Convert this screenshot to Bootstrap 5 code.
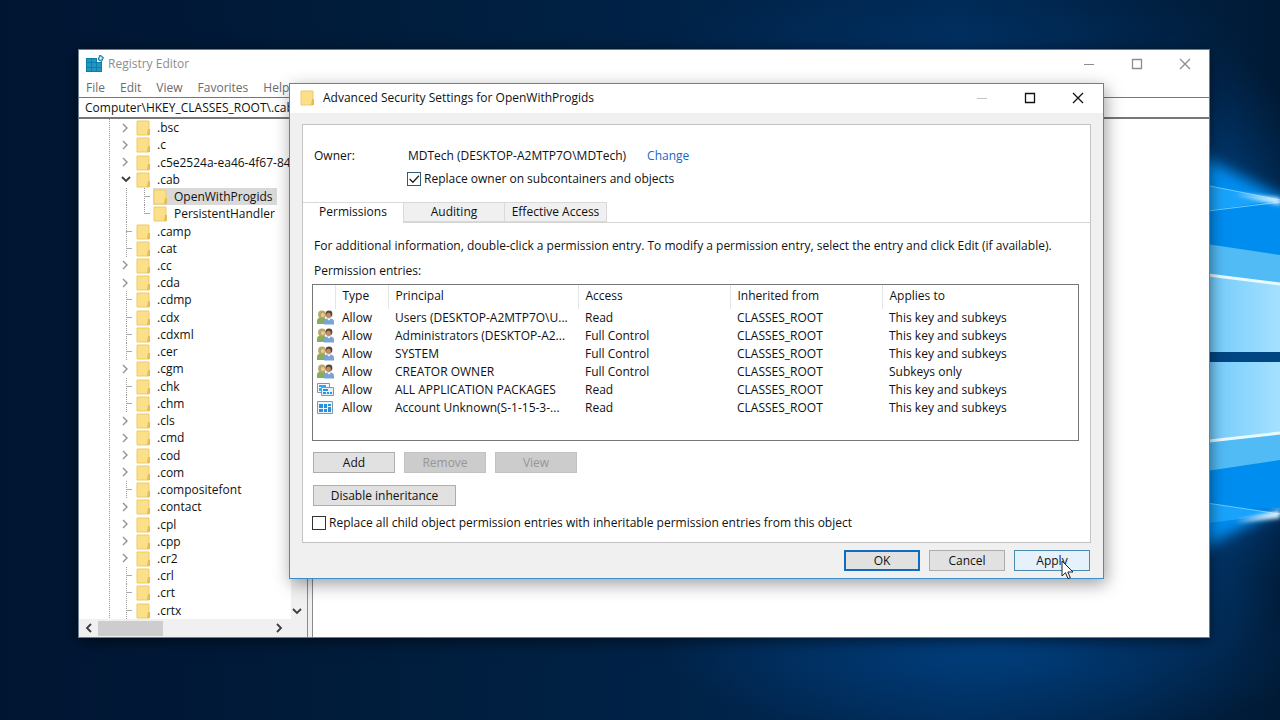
<!DOCTYPE html>
<html lang="en">
<head>
<meta charset="utf-8">
<meta name="viewport" content="width=device-width, initial-scale=1">
<title>Registry Editor</title>
<link href="https://cdn.jsdelivr.net/npm/bootstrap@5.3.0/dist/css/bootstrap.min.css" rel="stylesheet">
<style>
  body { font-family: "Open Sans", "Noto Sans", sans-serif; font-size: 12px; line-height: 18px; color: #111; background: #001c3a; }
  button, input { font: inherit; color: inherit; }
  .desktop { padding: 49px 70px 82px 78px; isolation: isolate; }
  .wallpaper { z-index: -1; }

  /* Registry Editor window */
  .reg-window { background: #fff; border: 1px solid #6d7f8f; box-shadow: 0 3px 14px rgba(0,0,0,.55); }
  .reg-title { height: 28px; padding: 0 18px 1px 7px; color: #8d8d8d; }
  .win-controls { gap: 36px; }
  .win-controls button { width: 12px; height: 12px; padding: 0; border: 0; background: none; display: block; }
  .win-controls svg { display: block; }
  .reg-menu { height: 19px; gap: 15px; padding: 1px 0 0 7px; }
  .reg-menu a { color: #6b6b6b; text-decoration: none; }
  .address { height: 22px; border: solid #777; border-width: 1px 0 2px; padding: 0 6px; outline: 0; width: 100%; }
  .tree-pane { width: 228px; }
  .tree { background: repeating-linear-gradient(#999 0 1px, #fff 1px 2px) 30px 0 / 1px 100% no-repeat; padding-left: 39px; }
  .tree li { flex: 1 1 0; line-height: 17px; min-height: 17px; white-space: nowrap; }
  .twist { width: 18px; flex: none; display: flex; align-items: center; align-self: stretch; padding-left: 3px; }
  .stub { background:
    linear-gradient(#aaa, #aaa) 8px 50% / 6px 1px no-repeat,
    repeating-linear-gradient(#999 0 1px, #fff 1px 2px) 8px 0 / 1px 100% no-repeat; }
  .tree li.child .line { width: 18px; flex: none; align-self: stretch; background: repeating-linear-gradient(#999 0 1px, #fff 1px 2px) 8px 0 / 1px 100% no-repeat; }
  .child .stub { width: 17px; }
  .child.last-child .stub { background-size: 6px 1px, 1px 50%; }
  .tree .label { padding-left: 6px; }
  .picked .label { padding-right: 5px; }
  .picked .folder, .picked .label { background-color: #d9d9d9; }
  .folder { width: 15px; height: 17px; flex: none; }
  .v-scroll { width: 16px; flex: none; background: #f0f0f0; padding: 0 5px 4px 0; }
  .h-scroll { height: 18px; background: #f0f0f0; padding: 0 23px 0 5px; }
  .thumb { width: 65px; height: 15px; background: #cdcdcd; margin-left: 5px; }
  .splitter { width: 6px; background: #f0f0f0; border: solid #8a8a8a; border-width: 0 1px; }

  /* Advanced security dialog */
  .sec-dialog { left: 289px; right: 176px; top: 83px; background: #f0f0f0; border: 1px solid #3d8fcc; box-shadow: 2px 5px 16px rgba(0,0,0,.38); padding-bottom: 7px; }
  .sec-title { height: 29px; background: #fff; padding: 0 19px 2px 10px; }
  .sec-panel { margin: 11px 12px 7px; background: #fff; border: 1px solid #c3c3c3; }
  .owner { padding: 21px 11px 14px; line-height: 20px; }
  .owner-name { width: 94px; }
  .owner a { color: #1668c4; text-decoration: none; margin-left: 21px; }
  .owner .tick-row { margin: 3px 0 0 -1px; height: 20px; }
  .tick-row { gap: 3px; }
  .tick { appearance: none; width: 14px; height: 14px; border: 1px solid #333; background: #fff; margin: 0; flex: none; }
  .tick:checked { border-color: #2c5b7c; background: url("data:image/svg+xml,%3Csvg xmlns='http://www.w3.org/2000/svg' viewBox='0 0 11 11'%3E%3Cpath d='M1.5 5.5l3 3 5.5-6' fill='none' stroke='%23222' stroke-width='1.2'/%3E%3C/svg%3E"); }
  .tabs { border-bottom: 1px solid #d4d4d4; height: 21px; margin-top: -1px; }
  .tabs button { width: 101px; border: 1px solid #d9d9d9; border-left-width: 0; background: #f0f0f0; padding: 0; height: 20px; line-height: 18px; }
  .tabs button.active { background: #fff; height: 21px; border-bottom: 0; padding-bottom: 2px; }
  .tabs button:last-child { width: 102px; }
  .tab-body { padding: 14px 11px 10px 9px; }
  .tab-body p { margin: 0 0 7px 2px; }
  .list-box { border: 1px solid #777; height: 157px; margin-bottom: 11px; }
  .entries { table-layout: fixed; width: 100%; }
  .entries th { font-weight: 400; height: 24px; padding: 0 7px 2px; border-right: 1px solid #e5e5e5; }
  .entries th:last-child { border-right: 0; }
  .entries td { height: 18px; padding: 0 7px; white-space: nowrap; overflow: hidden; text-overflow: ellipsis; }
  .entries td:first-child { padding: 0 0 0 4px; }
  .entries svg { display: block; width: 17px; height: 16px; }
  .push-row { gap: 9px; margin: 0 0 12px 1px; }
  .push { height: 21px; width: 82px; padding: 0; background: #e1e1e1; border: 1px solid #adadad; line-height: 17px; }
  .push:disabled { background: #ccc; border-color: #c2c2c2; color: #969696; }
  .push.wide { width: 143px; }
  .push.answer { width: 76px; }
  .push.ok { border: 2px solid #0f6cbf; }
  .push.hover { background: #e5f1fb; border-color: #4b8ab5; }
  .answers { gap: 9px; padding: 0 13px; }
  .pointer { left: 46px; top: 9px; z-index: 2; }
</style>
</head>
<body>
<svg class="d-none" aria-hidden="true">
  <symbol id="folder" viewBox="0 0 15 17"><path d="M1 2h12v14H1z" fill="#fbe089"/><path d="M1 2h12v14H1z" fill="none" stroke="#edcb68"/><path d="M12 10h2v6H11z" fill="#e6bd50"/></symbol>
  <symbol id="right" viewBox="0 0 8 10"><path d="M2 1l4 4-4 4" fill="none" stroke="#929292" stroke-width="1.4"/></symbol>
  <symbol id="down" viewBox="0 0 10 8"><path d="M1 2l4 4 4-4" fill="none" stroke="#3c3c3c" stroke-width="1.8"/></symbol>
  <symbol id="min" viewBox="0 0 12 12"><path d="M1 6.500h10" stroke="currentColor"/></symbol>
  <symbol id="max" viewBox="0 0 12 12"><path d="M1.500 1.500h9v9h-9z" fill="none" stroke="currentColor" stroke-width="1.3"/></symbol>
  <symbol id="close" viewBox="0 0 12 12"><path d="M1 1l10 10M11 1L1 11" stroke="currentColor" stroke-width="1.3"/></symbol>
  <symbol id="people" viewBox="0 0 17 16">
    <path d="M0 14V11q0-3 3-3.500h4q2 .5 2 3.500v3z" fill="#86ad5d"/><circle cx="5" cy="4.500" r="3.900" fill="#b9a566"/><circle cx="5.800" cy="5" r="2" fill="#e6c99f"/>
    <path d="M7 14.500V12q0-3 3-3.500h4q3 .5 3 3.500v2.500z" fill="#7ba3d6"/><circle cx="12" cy="4" r="3.400" fill="#5b4636"/><ellipse cx="11.500" cy="5.500" rx="2.300" ry="2.700" fill="#c58d66"/><path d="M10 8.500l2 2 2-2z" fill="#fff"/>
  </symbol>
  <symbol id="packages" viewBox="0 0 17 16">
    <path d="M.5 1.500h12v9H.5z" fill="#f4f9fd" stroke="#7d97ad"/><path d="M2 3h7v2H2zM2 6h2v3H2z" fill="#3ba2e5"/>
    <path d="M4.500 5.500h12v8h-12z" fill="#e5f2fb" stroke="#7d97ad"/><path d="M6 7h5v2H6zM6 10h3v2H6zM10 10h2v2h-2zM13 10h2v2h-2z" fill="#2492df"/>
  </symbol>
  <symbol id="account" viewBox="0 0 17 16">
    <path d="M.5 1.500h15v12H.5z" fill="#eef5fa" stroke="#7d97ad"/><path d="M2 4h4v4H2zM7 4h3v4H7zM11 4h3v2h-3zM2 9h4v3H2zM7 9h3v3H7zM11 7h3v5h-3z" fill="#2492df"/>
  </symbol>
</svg>

<div class="desktop position-relative min-vh-100 d-flex overflow-hidden">
  <svg class="wallpaper position-absolute top-0 start-0 w-100 h-100" viewBox="0 0 1280 720" preserveAspectRatio="none" aria-hidden="true">
    <defs>
      <linearGradient id="sky"><stop offset="0" stop-color="#001532"/><stop offset=".3" stop-color="#001d3c"/><stop offset=".75" stop-color="#002853"/><stop offset="1" stop-color="#001a35"/></linearGradient>
      <radialGradient id="low"><stop offset="0" stop-color="#004080"/><stop offset="1" stop-color="#004080" stop-opacity="0"/></radialGradient>
      <radialGradient id="glow"><stop offset="0" stop-color="#0078e0"/><stop offset=".5" stop-color="#00529f" stop-opacity=".7"/><stop offset="1" stop-color="#00407f" stop-opacity="0"/></radialGradient>
      <linearGradient id="pane"><stop offset="0" stop-color="#6cc8fb"/><stop offset="1" stop-color="#a5e1ff"/></linearGradient>
      <filter id="soft" x="-30%" y="-30%" width="160%" height="160%"><feGaussianBlur stdDeviation="7"/></filter>
      <filter id="spark" x="-30%" y="-80%" width="160%" height="260%"><feGaussianBlur stdDeviation="2"/></filter>
    </defs>
    <path fill="url(#sky)" d="M0 0h1280v720H0z"/>
    <ellipse cx="990" cy="640" rx="330" ry="110" fill="url(#low)"/>
    <ellipse cx="960" cy="50" rx="300" ry="70" fill="url(#low)" opacity=".35"/>
    <ellipse cx="1190" cy="352" rx="150" ry="320" fill="url(#glow)"/>
    <path d="M1180 146l120 60v294l-120 58z" fill="#008ef2" filter="url(#soft)"/>
    <path d="M1200 210l80-10v310l-80-10z" fill="#008df0"/>
    <path d="M1200 184l80 16-80 12zM1200 502l80 12-80 10z" fill="#19a3fb"/>
    <path d="M1200 243l80 12v205l-80 12z" fill="#51bbf6"/>
    <path d="M1200 274l80 10v149l-80 9z" fill="url(#pane)"/>
    <path d="M1200 274l80 10M1200 442l80-9" stroke="#e9faff" stroke-width="3"/>
    <path d="M1200 184l80 16M1200 212l80-10M1200 502l80 12" stroke="#65ccff"/>
    <path d="M1235 194l45 4v7zM1235 522l45-12v8z" fill="#e2f7ff" filter="url(#spark)"/>
    <path d="M1200 352h80v10h-80z" fill="#004682"/>
  </svg>

  <main class="reg-window flex-grow-1 d-flex flex-column">
    <header class="reg-title d-flex align-items-center">
      <svg width="18" height="18" viewBox="0 0 18 18" aria-hidden="true"><path d="M0 3h11v4h5v10H0z" fill="#0d7ea9"/><path d="M1 4h4v3H1zM6 4h4v3H6zM1 8h4v4H1zM6 8h4v4H6zM11 8h4v4h-4zM1 13h4v3H1zM6 13h4v3H6zM11 13h4v3h-4z" fill="#2296c0"/><path d="M14 0l3.500 2.500-2 4-3.500-2z" fill="#5cc1dc" stroke="#14799c"/><circle cx="14.700" cy="3.300" r="1" fill="#fff"/></svg>
      <span class="ms-1">Registry Editor</span>
      <div class="win-controls ms-auto d-flex">
        <button type="button" aria-label="Minimize" class="text-reset"><svg width="12" height="12"><use href="#min"/></svg></button>
        <button type="button" aria-label="Maximize" class="text-reset"><svg width="12" height="12"><use href="#max"/></svg></button>
        <button type="button" aria-label="Close" class="text-reset"><svg width="12" height="12"><use href="#close"/></svg></button>
      </div>
    </header>
    <nav class="reg-menu d-flex"><a href="#">File</a><a href="#">Edit</a><a href="#">View</a><a href="#">Favorites</a><a href="#">Help</a></nav>
    <input class="address" aria-label="Address" value="Computer\HKEY_CLASSES_ROOT\.cab\OpenWithProgids">
    <div class="flex-grow-1 d-flex">
      <div class="tree-pane d-flex flex-column">
        <div class="flex-grow-1 d-flex">
          <ul class="tree list-unstyled m-0 flex-grow-1 d-flex flex-column">
            <li class="d-flex align-items-center"><span class="twist"><svg width="8" height="10"><use href="#right"/></svg></span><svg class="folder"><use href="#folder"/></svg><span class="label">.bsc</span></li>
            <li class="d-flex align-items-center"><span class="twist"><svg width="8" height="10"><use href="#right"/></svg></span><svg class="folder"><use href="#folder"/></svg><span class="label">.c</span></li>
            <li class="d-flex align-items-center"><span class="twist"><svg width="8" height="10"><use href="#right"/></svg></span><svg class="folder"><use href="#folder"/></svg><span class="label">.c5e2524a-ea46-4f67-84</span></li>
            <li class="d-flex align-items-center"><span class="twist"><svg width="10" height="8"><use href="#down"/></svg></span><svg class="folder"><use href="#folder"/></svg><span class="label">.cab</span></li>
            <li class="child picked d-flex align-items-center"><span class="line"></span><span class="twist stub"></span><svg class="folder"><use href="#folder"/></svg><span class="label">OpenWithProgids</span></li>
            <li class="child last-child d-flex align-items-center"><span class="line"></span><span class="twist stub"></span><svg class="folder"><use href="#folder"/></svg><span class="label">PersistentHandler</span></li>
            <li class="d-flex align-items-center"><span class="twist stub"></span><svg class="folder"><use href="#folder"/></svg><span class="label">.camp</span></li>
            <li class="d-flex align-items-center"><span class="twist stub"></span><svg class="folder"><use href="#folder"/></svg><span class="label">.cat</span></li>
            <li class="d-flex align-items-center"><span class="twist"><svg width="8" height="10"><use href="#right"/></svg></span><svg class="folder"><use href="#folder"/></svg><span class="label">.cc</span></li>
            <li class="d-flex align-items-center"><span class="twist"><svg width="8" height="10"><use href="#right"/></svg></span><svg class="folder"><use href="#folder"/></svg><span class="label">.cda</span></li>
            <li class="d-flex align-items-center"><span class="twist stub"></span><svg class="folder"><use href="#folder"/></svg><span class="label">.cdmp</span></li>
            <li class="d-flex align-items-center"><span class="twist stub"></span><svg class="folder"><use href="#folder"/></svg><span class="label">.cdx</span></li>
            <li class="d-flex align-items-center"><span class="twist stub"></span><svg class="folder"><use href="#folder"/></svg><span class="label">.cdxml</span></li>
            <li class="d-flex align-items-center"><span class="twist stub"></span><svg class="folder"><use href="#folder"/></svg><span class="label">.cer</span></li>
            <li class="d-flex align-items-center"><span class="twist"><svg width="8" height="10"><use href="#right"/></svg></span><svg class="folder"><use href="#folder"/></svg><span class="label">.cgm</span></li>
            <li class="d-flex align-items-center"><span class="twist stub"></span><svg class="folder"><use href="#folder"/></svg><span class="label">.chk</span></li>
            <li class="d-flex align-items-center"><span class="twist stub"></span><svg class="folder"><use href="#folder"/></svg><span class="label">.chm</span></li>
            <li class="d-flex align-items-center"><span class="twist"><svg width="8" height="10"><use href="#right"/></svg></span><svg class="folder"><use href="#folder"/></svg><span class="label">.cls</span></li>
            <li class="d-flex align-items-center"><span class="twist"><svg width="8" height="10"><use href="#right"/></svg></span><svg class="folder"><use href="#folder"/></svg><span class="label">.cmd</span></li>
            <li class="d-flex align-items-center"><span class="twist"><svg width="8" height="10"><use href="#right"/></svg></span><svg class="folder"><use href="#folder"/></svg><span class="label">.cod</span></li>
            <li class="d-flex align-items-center"><span class="twist"><svg width="8" height="10"><use href="#right"/></svg></span><svg class="folder"><use href="#folder"/></svg><span class="label">.com</span></li>
            <li class="d-flex align-items-center"><span class="twist stub"></span><svg class="folder"><use href="#folder"/></svg><span class="label">.compositefont</span></li>
            <li class="d-flex align-items-center"><span class="twist"><svg width="8" height="10"><use href="#right"/></svg></span><svg class="folder"><use href="#folder"/></svg><span class="label">.contact</span></li>
            <li class="d-flex align-items-center"><span class="twist"><svg width="8" height="10"><use href="#right"/></svg></span><svg class="folder"><use href="#folder"/></svg><span class="label">.cpl</span></li>
            <li class="d-flex align-items-center"><span class="twist"><svg width="8" height="10"><use href="#right"/></svg></span><svg class="folder"><use href="#folder"/></svg><span class="label">.cpp</span></li>
            <li class="d-flex align-items-center"><span class="twist"><svg width="8" height="10"><use href="#right"/></svg></span><svg class="folder"><use href="#folder"/></svg><span class="label">.cr2</span></li>
            <li class="d-flex align-items-center"><span class="twist stub"></span><svg class="folder"><use href="#folder"/></svg><span class="label">.crl</span></li>
            <li class="d-flex align-items-center"><span class="twist stub"></span><svg class="folder"><use href="#folder"/></svg><span class="label">.crt</span></li>
            <li class="d-flex align-items-center"><span class="twist stub"></span><svg class="folder"><use href="#folder"/></svg><span class="label">.crtx</span></li>
          </ul>
          <div class="v-scroll d-flex align-items-end justify-content-center"><svg width="10" height="8"><use href="#down"/></svg></div>
        </div>
        <div class="h-scroll d-flex align-items-center">
          <svg width="9" height="10" viewBox="0 0 9 10"><path d="M7 1L3 5l4 4" fill="none" stroke="#3c3c3c" stroke-width="1.800"/></svg>
          <div class="thumb"></div>
          <svg class="ms-auto" width="9" height="10" viewBox="0 0 9 10"><path d="M2 1l4 4-4 4" fill="none" stroke="#3c3c3c" stroke-width="1.800"/></svg>
        </div>
      </div>
      <div class="splitter"></div>
      <div class="flex-grow-1"></div>
    </div>
  </main>

  <section class="sec-dialog position-absolute" role="dialog" aria-labelledby="dlg-name">
    <header class="sec-title d-flex align-items-center">
      <svg class="folder"><use href="#folder"/></svg>
      <span id="dlg-name" class="ps-2">Advanced Security Settings for OpenWithProgids</span>
      <div class="win-controls ms-auto d-flex">
        <button type="button" aria-label="Minimize" disabled class="opacity-25"><svg width="12" height="12"><use href="#min"/></svg></button>
        <button type="button" aria-label="Maximize"><svg width="12" height="12"><use href="#max"/></svg></button>
        <button type="button" aria-label="Close"><svg width="12" height="12"><use href="#close"/></svg></button>
      </div>
    </header>
    <div class="sec-panel">
      <div class="owner d-flex">
        <div class="owner-name">Owner:</div>
        <div>
          <div>MDTech (DESKTOP-A2MTP7O\MDTech)<a href="#">Change</a></div>
          <div class="tick-row d-flex align-items-center">
            <input class="tick" type="checkbox" id="sub" checked><label for="sub">Replace owner on subcontainers and objects</label>
          </div>
        </div>
      </div>
      <div class="tabs d-flex" role="tablist">
        <button type="button" role="tab" class="active" aria-selected="true">Permissions</button><button type="button" role="tab">Auditing</button><button type="button" role="tab">Effective Access</button>
      </div>
      <div class="tab-body">
        <p>For additional information, double-click a permission entry. To modify a permission entry, select the entry and click Edit (if available).</p>
        <p class="mb-1">Permission entries:</p>
        <div class="list-box">
          <table class="entries">
            <colgroup><col style="width:22px"><col style="width:53px"><col style="width:190px"><col style="width:152px"><col style="width:152px"><col></colgroup>
            <thead><tr><th></th><th>Type</th><th>Principal</th><th>Access</th><th>Inherited from</th><th>Applies to</th></tr></thead>
            <tbody>
              <tr><td><svg><use href="#people"/></svg></td><td>Allow</td><td>Users (DESKTOP-A2MTP7O\U...</td><td>Read</td><td>CLASSES_ROOT</td><td>This key and subkeys</td></tr>
              <tr><td><svg><use href="#people"/></svg></td><td>Allow</td><td>Administrators (DESKTOP-A2...</td><td>Full Control</td><td>CLASSES_ROOT</td><td>This key and subkeys</td></tr>
              <tr><td><svg><use href="#people"/></svg></td><td>Allow</td><td>SYSTEM</td><td>Full Control</td><td>CLASSES_ROOT</td><td>This key and subkeys</td></tr>
              <tr><td><svg><use href="#people"/></svg></td><td>Allow</td><td>CREATOR OWNER</td><td>Full Control</td><td>CLASSES_ROOT</td><td>Subkeys only</td></tr>
              <tr><td><svg><use href="#packages"/></svg></td><td>Allow</td><td>ALL APPLICATION PACKAGES</td><td>Read</td><td>CLASSES_ROOT</td><td>This key and subkeys</td></tr>
              <tr><td><svg><use href="#account"/></svg></td><td>Allow</td><td>Account Unknown(S-1-15-3-...</td><td>Read</td><td>CLASSES_ROOT</td><td>This key and subkeys</td></tr>
            </tbody>
          </table>
        </div>
        <div class="push-row d-flex">
          <button type="button" class="push">Add</button><button type="button" class="push" disabled>Remove</button><button type="button" class="push" disabled>View</button>
        </div>
        <div class="push-row d-flex mb-2">
          <button type="button" class="push wide">Disable inheritance</button>
        </div>
        <div class="tick-row d-flex align-items-center">
          <input class="tick" type="checkbox" id="all"><label for="all">Replace all child object permission entries with inheritable permission entries from this object</label>
        </div>
      </div>
    </div>
    <div class="answers d-flex justify-content-end">
      <button type="button" class="push answer ok">OK</button>
      <button type="button" class="push answer">Cancel</button>
      <button type="button" class="push answer hover position-relative">Apply
        <svg class="pointer position-absolute" width="13" height="20" viewBox="0 0 13 20" aria-hidden="true"><path d="M1 1v15l3.500-3.300 2.500 6 2.300-1-2.500-5.700H12z" fill="#fff" stroke="#222"/></svg>
      </button>
    </div>
  </section>
</div>
<script src="https://cdn.jsdelivr.net/npm/bootstrap@5.3.0/dist/js/bootstrap.bundle.min.js"></script>
</body>
</html>
